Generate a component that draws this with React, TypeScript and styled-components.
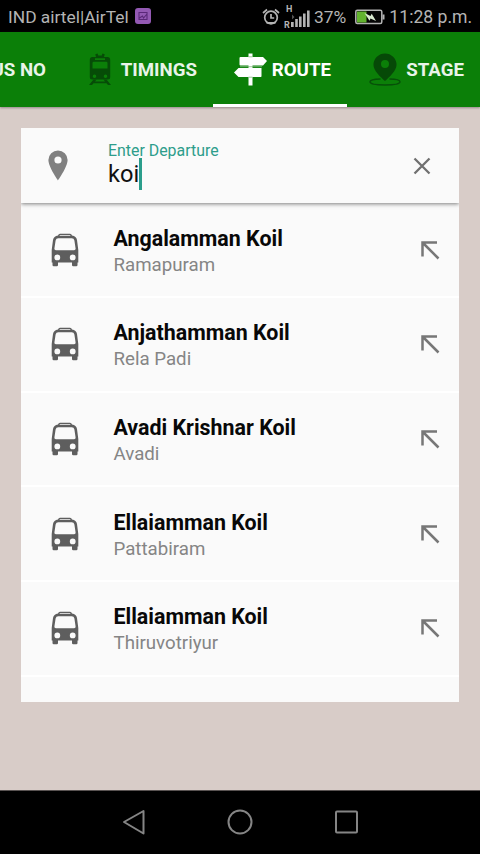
import React from "react";
import styled, { createGlobalStyle } from "styled-components";

const Global = createGlobalStyle`
  * { box-sizing: border-box; }
  body { margin: 0; background: #d8ccc8; font-family: Roboto, "Noto Sans", sans-serif; }
  svg { display: block; flex: none; }
`;

const Screen = styled.div`
  width: 480px;
  height: 854px;
  display: flex;
  flex-direction: column;
  overflow: hidden;
  background: #d8ccc8;
`;

const StatusBar = styled.header`
  height: 32px;
  flex: none;
  display: flex;
  align-items: center;
  padding: 2px 8px 0;
  background: #000;
  color: #b4b4b4;
  line-height: 30px;
  white-space: nowrap;
`;

const StatusText = styled.span<{ $width: number; $size?: number }>`
  width: ${(p) => p.$width}px;
  flex: none;
  font-size: ${(p) => p.$size ?? 17.4}px;
`;

const StatusIcons = styled.div`
  display: flex;
  align-items: center;
  margin-left: auto;
`;

const AppBadge = styled.div`
  width: 16px;
  height: 16px;
  border-radius: 3px;
  margin-left: 7px;
  margin-top: -2px;
  background: #9359b3;
`;

const Tabs = styled.nav`
  height: 75px;
  flex: none;
  display: flex;
  justify-content: flex-start;
  background: #0b7f08;
  box-shadow: 0 1px 2px rgba(70, 60, 60, 0.45);
`;

const Tab = styled.div<{ $width: number; $active?: boolean; $gap: number }>`
  width: ${(p) => p.$width}px;
  flex: none;
  height: 75px;
  display: flex;
  align-items: center;
  justify-content: flex-end;
  gap: ${(p) => p.$gap}px;
  padding: 3px 16px 0 0;
  border-bottom: 3px solid ${(p) => (p.$active ? "#fff" : "transparent")};
  color: ${(p) => (p.$active ? "#fff" : "#e9f4e8")};
  font-size: 18.7px;
  font-weight: 700;
  white-space: nowrap;
`;

const Content = styled.main`
  flex: 1;
  padding: 21px 21px 0;
`;

const Card = styled.section`
  height: 574px;
  width: 438px;
  background: #fafafa;
  display: flex;
  flex-direction: column;
`;

const SearchBar = styled.div`
  height: 75px;
  flex: none;
  display: flex;
  align-items: center;
  padding: 0 28px 0 27px;
  box-shadow: 0 1px 4px rgba(0, 0, 0, 0.5);
  clip-path: inset(0 0 -8px 0);
`;

const Field = styled.div`
  flex: 1;
  height: 75px;
  margin-left: 40px;
  padding-top: 14px;
`;

const Label = styled.div`
  color: #2d9d8b;
  font-size: 15.9px;
  line-height: 18px;
`;

const Value = styled.div`
  display: flex;
  align-items: center;
  height: 33px;
  margin-top: -3px;
  color: #111;
  font-size: 23.6px;
  line-height: 33px;
  span { padding-top: 2px; }
`;

const Caret = styled.i`
  width: 3px;
  height: 32px;
  background: #2a9d8b;
`;

const Row = styled.div`
  height: 94.7px;
  flex: none;
  display: flex;
  align-items: center;
  padding: 0 19px 0 30px;
  border-bottom: 2px solid #fff;
  &:first-child { height: 95px; }
`;

const Names = styled.div`
  flex: 1;
  margin-left: 34.5px;
  padding-top: 4px;
`;

const Name = styled.div`
  color: #080808;
  font-size: 21.4px;
  font-weight: 700;
  line-height: 27px;
`;

const Area = styled.div`
  color: #858585;
  font-size: 18.7px;
  line-height: 27px;
`;

const NavBar = styled.footer`
  height: 64px;
  flex: none;
  display: flex;
  justify-content: center;
  align-items: center;
  gap: 80px;
  padding-bottom: 2px;
  background: #000;
  border-top: 1px solid #595352;
`;

const BadgeGlyph = () => (
  <svg width="16" height="16" viewBox="0 0 16 16" fill="none" stroke="#5a2878" strokeWidth="1.1">
    <path d="M4 4.500h8v7H4zM4.500 10l3-2 1 2 3.500-4" />
  </svg>
);

const Alarm = () => (
  <svg width="18" height="18" viewBox="0 0 18 18" fill="none" stroke="#b4b4b4" strokeWidth="1.7">
    <circle cx="9" cy="9.5" r="6.3" />
    <path d="M9 6v4h3.2M1 5l4-3.5M17 5l-4-3.500M4.500 14.800h9" />
  </svg>
);

const SignalGroup = styled.div`
  display: flex;
  align-items: flex-end;
  height: 24px;
  margin: 0 4px 0 4px;
`;

const SignalLetters = styled.div`
  display: flex;
  flex-direction: column;
  justify-content: space-between;
  width: 7px;
  height: 24px;
  font-size: 9px;
  font-weight: 700;
  line-height: 8px;
  span:first-child { padding-left: 2px; }
`;

const Signal = () => (
  <svg width="19" height="24" viewBox="0 0 19 24" fill="#b4b4b4">
    <path d="M0 17h2.700v5H0zM4.200 14h2.600v8H4.200zM8 11.500h2.600V22H8zM12 8.500h2.600V22H12zM16 5.500h2.600V22H16z" />
    <path d="M-3 12l2.500-2.500v5zM1 9.500l2.500 2.500L1 14.500z" fill="#555" />
  </svg>
);

const Battery = () => (
  <svg width="30" height="16" viewBox="0 0 30 16">
    <rect x="0.8" y="1.3" width="26" height="13.2" rx="1.5" fill="#050505" stroke="#b4b4b4" strokeWidth="1.5" />
    <path d="M27.500 5.500h2v5h-2z" fill="#b4b4b4" />
    <path d="M2 2.5h9.5v11H2z" fill="#62b32e" />
    <path d="M9.5 4l6 3 1.2-2.2L21 12l-5.5-2.4-1 2.2z" fill="#d9ead0" />
  </svg>
);

const Train = () => (
  <svg width="22" height="33" viewBox="0 0 22 33" fill="#064c07">
    <path fillRule="evenodd" d="M3.500 4h3.500L6.300 1.300 8.500.600 9.300 2.500h3.400L13.500.600l2.200.700L15 4h3.500q2.700 0 2.700 3v17q0 2.500-2.500 2.500h-15.400Q.8 26.500.8 24V7q0-3 2.700-3zM6 5.200v1.700h10V5.200zM4.700 8.800q-1.200 0-1.200 1.200v5.500h15V10q0-1.200-1.200-1.200zM5.500 21.500a1.800 1.800 0 1 0 .01 3.600A1.800 1.800 0 0 0 5.500 21.500zm11 0a1.800 1.800 0 1 0 .01 3.600A1.800 1.800 0 0 0 16.500 21.500z" />
    <path d="M4.500 26.500h3l-1.500 2h10l-1.500-2h3L22 32h-3l-1.500-1.700h-13L3 32H0z" />
  </svg>
);

const Signpost = () => (
  <svg width="33" height="33" viewBox="0 0 33 33" fill="#fff">
    <path d="M14.500 0.500h4V4H29l4 4-4 4.500H6.500q-1 0-1-1V5q0-1 1-1h8zM4.500 15H27.500v8.300q0 .7-.7.700h-8.300v8.500h-4V24h-10L0 19.500zM14.500 12h4v3.500h-4z" />
    <path d="M6 13.700h22" stroke="#86bd83" strokeWidth="0.800" fill="none" />
    <path d="M14.500 3.800h4M14.500 24.200h4" stroke="#86bd83" strokeWidth="0.800" />
  </svg>
);

const StagePin = () => (
  <svg width="32" height="33" viewBox="0 0 32 33">
    <path d="M11.500 26C5 26 1 27 1 28.800c0 2 6 3.200 15 3.200s15-1.200 15-3.200C31 27 27 26 20.500 26" fill="none" stroke="#075009" strokeWidth="1.400" />
    <path fillRule="evenodd" fill="#064907" d="M16 .500A11.500 11.500 0 0 0 4.500 12c0 5.500 7 12 11.500 16 4.500-4 11.500-10.500 11.500-16A11.500 11.500 0 0 0 16 .500zM16 7a4 4 0 1 1 0 8 4 4 0 0 1 0-8z" />
  </svg>
);

const PlacePin = () => (
  <svg width="20" height="31" viewBox="0 0 20 31">
    <path fillRule="evenodd" fill="#808080" d="M10 .500A9.600 9.600 0 0 0 .400 10.100C.4 17 10 30.500 10 30.500s9.600-13.500 9.600-20.400A9.600 9.600 0 0 0 10 .500zm0 5.900a3.600 3.600 0 1 1 0 7.200 3.600 3.600 0 0 1 0-7.200z" />
  </svg>
);

const Close = () => (
  <svg width="18" height="18" viewBox="0 0 18 18" stroke="#707070" strokeWidth="2.300">
    <path d="M1.500 1.500l15 15m0-15l-15 15" />
  </svg>
);

const Bus = () => (
  <svg width="28" height="34" viewBox="0 0 28 34">
    <path fillRule="evenodd" fill="#5e5e5e" d="M7 2.500Q7.500.800 9 .800h10q1.500 0 2 1.700 4.300.5 5 4.500L27.300 17v12.500H26.500V32q0 1.200-1.200 1.200h-3.100Q21 33.200 21 32v-2.500H7V32q0 1.200-1.200 1.200H2.700Q1.500 33.200 1.500 32v-2.500H.700V17L2 7q.7-4 5-4.500zM8.700 2.300v.8h10.600v-.8zM7.300 5.300Q5 5.300 4.600 7.500L3.400 15.500q-.2 1.700 1.500 1.700h18.200q1.700 0 1.500-1.700l-1.200-8Q23 5.300 20.700 5.300zM6.300 21.500a2.900 2.900 0 1 0 .01 5.800 2.900 2.900 0 0 0 0-5.800zm15.400 0a2.900 2.900 0 1 0 .01 5.800 2.900 2.900 0 0 0 0-5.800z" />
  </svg>
);

const Arrow = () => (
  <svg width="20" height="20" viewBox="0 0 20 20" fill="none" stroke="#777" strokeWidth="2.500">
    <path d="M2.500 16.500V2.500H17M2.500 2.500L18.500 18.500" />
  </svg>
);

const NavBack = () => (
  <svg width="26" height="26" viewBox="0 0 26 26" fill="none" stroke="#858585" strokeWidth="2" strokeLinejoin="round">
    <path d="M3 13L22.500 2v22.500z" />
  </svg>
);

const NavHome = () => (
  <svg width="26" height="26" viewBox="0 0 26 26" fill="none" stroke="#858585" strokeWidth="2">
    <circle cx="13" cy="13" r="11.500" />
  </svg>
);

const NavRecent = () => (
  <svg width="26" height="26" viewBox="0 0 26 26" fill="none" stroke="#858585" strokeWidth="2">
    <rect x="3" y="2.500" width="21" height="21" rx="1" />
  </svg>
);

const stops = [
  ["Angalamman Koil", "Ramapuram"],
  ["Anjathamman Koil", "Rela Padi"],
  ["Avadi Krishnar Koil", "Avadi"],
  ["Ellaiamman Koil", "Pattabiram"],
  ["Ellaiamman Koil", "Thiruvotriyur"],
];

export default function App() {
  return (
    <Screen>
      <Global />
      <StatusBar>
        <StatusText $width={120}>IND airtel|AirTel</StatusText>
        <AppBadge><BadgeGlyph /></AppBadge>
        <StatusIcons>
          <Alarm />
          <SignalGroup>
            <SignalLetters><span>H</span><span>R</span></SignalLetters>
            <Signal />
          </SignalGroup>
          <StatusText $width={41}>37%</StatusText>
          <Battery />
        </StatusIcons>
        <StatusText $width={87} $size={17.6}>&nbsp;11:28 p.m.</StatusText>
      </StatusBar>
      <Tabs>
        <Tab $width={62} $gap={0}>BUS NO</Tab>
        <Tab $width={151} $gap={10}><Train />TIMINGS</Tab>
        <Tab $width={134} $gap={5} $active><Signpost />ROUTE</Tab>
        <Tab $width={133} $gap={5}><StagePin />STAGE</Tab>
      </Tabs>
      <Content>
        <Card>
          <SearchBar>
            <PlacePin />
            <Field>
              <Label>Enter Departure</Label>
              <Value><span>koi</span><Caret /></Value>
            </Field>
            <Close />
          </SearchBar>
          <div>
            {stops.map(([name, area]) => (
              <Row key={name + area}>
                <Bus />
                <Names>
                  <Name>{name}</Name>
                  <Area>{area}</Area>
                </Names>
                <Arrow />
              </Row>
            ))}
          </div>
        </Card>
      </Content>
      <NavBar>
        <NavBack />
        <NavHome />
        <NavRecent />
      </NavBar>
    </Screen>
  );
}
